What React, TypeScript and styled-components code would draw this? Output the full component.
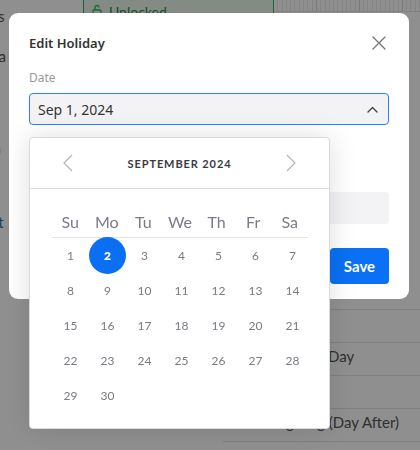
import React from "react";
import styled, { createGlobalStyle } from "styled-components";

const Global = createGlobalStyle`
  html, body { margin: 0; padding: 0; }
  body { width: 420px; height: 450px; overflow: hidden; background: #fff; font-family: "Lato", "Noto Sans", sans-serif; }
`;

/* ---------- background page ---------- */
const Page = styled.div`
  width: 420px;
  height: 450px;
  display: grid;
  grid-template-columns: 83px 191px 1fr;
  grid-template-rows: 12px 1fr;
  background: #fff;
`;
const SideCol = styled.div`
  grid-row: 1 / 3;
  display: flex;
  flex-direction: column;
  gap: 28px;
  padding-top: 10px;
  margin-left: -10px;
  font-size: 15px;
  color: #555;
`;
const SideText = styled.div<{ $blue?: boolean; $mt?: number }>`
  color: ${(p) => (p.$blue ? "#2d6fb5" : "#555")};
  margin-top: ${(p) => p.$mt ?? 0}px;
  height: 12px;
  line-height: 12px;
`;
const GridStrip = styled.div`
  display: grid;
  grid-template-columns: repeat(34, 1fr);
  border-bottom: 1px solid #e5e5e5;
`;
const GridCell = styled.div<{ $major?: boolean }>`
  border-right: 1px solid ${(p) => (p.$major ? "#d8d8d8" : "#ececec")};
`;
const RightCol = styled.div`
  grid-row: 1 / 3;
  display: flex;
  flex-direction: column;
`;
const LockBox = styled.div`
  margin-top: -4px;
  height: 30px;
  box-sizing: border-box;
  border: 1.5px solid #2fb84f;
  background: #eaf8ec;
  display: flex;
  align-items: center;
  gap: 7px;
  padding-left: 8px;
  font-size: 14px;
  color: #2b8a3e;
`;
const GreenLine = styled.div`
  height: 44px;
  border-bottom: 1.5px solid #2fb84f;
`;
const Table = styled.div`
  position: absolute;
  left: 223px;
  right: 0;
  top: 277px;
  display: flex;
  flex-direction: column;
`;
const TRow = styled.div<{ $indent?: number }>`
  height: 33px;
  box-sizing: border-box;
  border-bottom: 1px solid #e2e2e2;
  display: flex;
  align-items: center;
  padding: 0 0 6px ${(p) => p.$indent ?? 16}px;
  font-size: 15px;
  color: #555;
  white-space: nowrap;
`;

/* ---------- overlay + modal ---------- */
const Overlay = styled.div`
  position: fixed;
  inset: 0;
  background: rgba(0, 0, 0, 0.44);
  display: flex;
  align-items: flex-start;
  padding: 13px 0 0 9px;
`;
const Modal = styled.div`
  width: 400px;
  background: #fff;
  border-radius: 9px;
  padding: 20px 20px 15px 20px;
  box-sizing: border-box;
  display: flex;
  flex-direction: column;
  font-family: "Noto Sans", sans-serif;
`;
const Header = styled.div`
  display: flex;
  align-items: center;
  justify-content: space-between;
  height: 20px;
`;
const Title = styled.div`
  font-size: 13px;
  font-weight: 600;
  color: #333;
`;
const CloseBtn = styled.button`
  border: 0;
  background: none;
  padding: 0;
  width: 16px;
  height: 16px;
  display: flex;
  align-items: center;
  justify-content: center;
  margin-right: 2px;
`;
const Field = styled.div`
  display: flex;
  flex-direction: column;
`;
const Label = styled.div<{ $mt: number }>`
  margin-top: ${(p) => p.$mt}px;
  font-size: 12px;
  color: #9a9a9a;
  height: 18px;
  line-height: 18px;
  margin-bottom: 6px;
`;
const InputWrap = styled.div`
  position: relative;
`;
const Input = styled.div<{ $active?: boolean }>`
  height: 32px;
  box-sizing: border-box;
  border-radius: 4px;
  background: #f3f3f5;
  border: 1px solid ${(p) => (p.$active ? "#2f80ed" : "#f3f3f5")};
  display: flex;
  align-items: center;
  justify-content: space-between;
  padding: 0 10px 0 8px;
  font-size: 14px;
  color: #333;
`;
const Footer = styled.div`
  margin-top: 24px;
  display: flex;
  justify-content: flex-end;
  gap: 10px;
`;
const SaveBtn = styled.button`
  height: 36px;
  width: 59px;
  border: 0;
  border-radius: 4px;
  background: #0a70f5;
  color: #fff;
  font-family: "Lato", sans-serif;
  font-weight: 700;
  font-size: 15px;
`;

/* ---------- calendar ---------- */
const Popup = styled.div`
  position: absolute;
  top: calc(100% + 12px);
  left: 0;
  width: 301px;
  height: 292px;
  box-sizing: border-box;
  background: #fff;
  border: 1px solid #d9d9e3;
  border-radius: 4px;
  box-shadow: 0 0 28px rgba(0, 0, 0, 0.13);
  font-family: "Lato", sans-serif;
  z-index: 5;
  display: flex;
  flex-direction: column;
`;
const CalHead = styled.div`
  height: 50px;
  flex: none;
  border-bottom: 1px solid #dcdce4;
  display: flex;
  align-items: center;
  justify-content: space-between;
  padding: 0 32px 0 32px;
`;
const Month = styled.div`
  font-size: 11px;
  font-weight: 700;
  letter-spacing: 0.9px;
  color: #3a3a44;
`;
const NavBtn = styled.button`
  border: 0;
  background: none;
  padding: 0;
  width: 12px;
  height: 18px;
  display: flex;
  align-items: center;
  justify-content: center;
`;
const CalBody = styled.div`
  padding: 17px 21px 0 22px;
`;
const WeekRow = styled.div`
  display: grid;
  grid-template-columns: repeat(7, 1fr);
  height: 32px;
  border-bottom: 1px solid #e3e3e8;
  box-sizing: border-box;
`;
const WeekDay = styled.div`
  text-align: center;
  font-size: 16px;
  color: #7b7b8a;
  line-height: 32px;
`;
const Days = styled.div`
  display: grid;
  grid-template-columns: repeat(7, 1fr);
  grid-auto-rows: 35px;
`;
const Day = styled.div<{ $sel?: boolean }>`
  display: flex;
  align-items: center;
  justify-content: center;
  font-size: 12px;
  font-weight: ${(p) => (p.$sel ? 800 : 400)};
  color: ${(p) => (p.$sel ? "#fff" : "#7a7a84")};
  span {
    width: 37px;
    height: 37px;
    border-radius: 50%;
    display: flex;
    align-items: center;
    justify-content: center;
    background: ${(p) => (p.$sel ? "#0a6ff5" : "transparent")};
  }
`;

const weekdays = ["Su", "Mo", "Tu", "We", "Th", "Fr", "Sa"];
const days = Array.from({ length: 30 }, (_, i) => i + 1);

export default function App() {
  return (
    <>
      <Global />
      <Page>
        <SideCol>
          <SideText>es</SideText>
          <SideText>da</SideText>
          <SideText $mt={52}>la</SideText>
          <SideText $blue $mt={34}>ot</SideText>
        </SideCol>
        <GridStrip>
          {Array.from({ length: 34 }).map((_, i) => (
            <GridCell key={i} $major={i % 10 === 9} />
          ))}
        </GridStrip>
        <RightCol>
          <LockBox>
            <svg width="10" height="14" viewBox="0 0 10 14" fill="none" stroke="#2fb84f" strokeWidth="1.3">
              <rect x="1" y="6" width="8" height="7" rx="1" />
              <path d="M3 6V3.5a2 2 0 0 1 4 0" />
            </svg>
            Unlocked
          </LockBox>
          <GreenLine />
          <GreenLine />
        </RightCol>
      </Page>
      <Table>
        <TRow />
        <TRow />
        <TRow $indent={64}>Labor Day</TRow>
        <TRow />
        <TRow $indent={16}>Thanksgiving (Day After)</TRow>
      </Table>

      <Overlay>
        <Modal>
          <Header>
            <Title>Edit Holiday</Title>
            <CloseBtn aria-label="close">
              <svg width="14" height="14" viewBox="0 0 14 14" stroke="#777" strokeWidth="1.3" strokeLinecap="round">
                <path d="M1 1l12 12M13 1L1 13" />
              </svg>
            </CloseBtn>
          </Header>
          <Field>
            <Label $mt={16}>Date</Label>
            <InputWrap>
              <Input $active>
                Sep 1, 2024
                <svg width="11" height="7" viewBox="0 0 11 7" fill="none" stroke="#444" strokeWidth="1.4" strokeLinecap="round" strokeLinejoin="round">
                  <path d="M1 6l4.5-4.5L10 6" />
                </svg>
              </Input>
              <Popup>
                <CalHead>
                  <NavBtn aria-label="previous">
                    <svg width="10" height="18" viewBox="0 0 10 18" fill="none" stroke="#b4b4c0" strokeWidth="1.2">
                      <path d="M9 1L1 9l8 8" />
                    </svg>
                  </NavBtn>
                  <Month>SEPTEMBER 2024</Month>
                  <NavBtn aria-label="next">
                    <svg width="10" height="18" viewBox="0 0 10 18" fill="none" stroke="#b4b4c0" strokeWidth="1.2">
                      <path d="M1 1l8 8-8 8" />
                    </svg>
                  </NavBtn>
                </CalHead>
                <CalBody>
                  <WeekRow>
                    {weekdays.map((w) => (
                      <WeekDay key={w}>{w}</WeekDay>
                    ))}
                  </WeekRow>
                  <Days>
                    {days.map((d) => (
                      <Day key={d} $sel={d === 2}>
                        <span>{d}</span>
                      </Day>
                    ))}
                  </Days>
                </CalBody>
              </Popup>
            </InputWrap>
          </Field>
          <Field>
            <Label $mt={43}>Name</Label>
            <Input>Labor Day</Input>
          </Field>
          <Footer>
            <SaveBtn>Save</SaveBtn>
          </Footer>
        </Modal>
      </Overlay>
    </>
  );
}
